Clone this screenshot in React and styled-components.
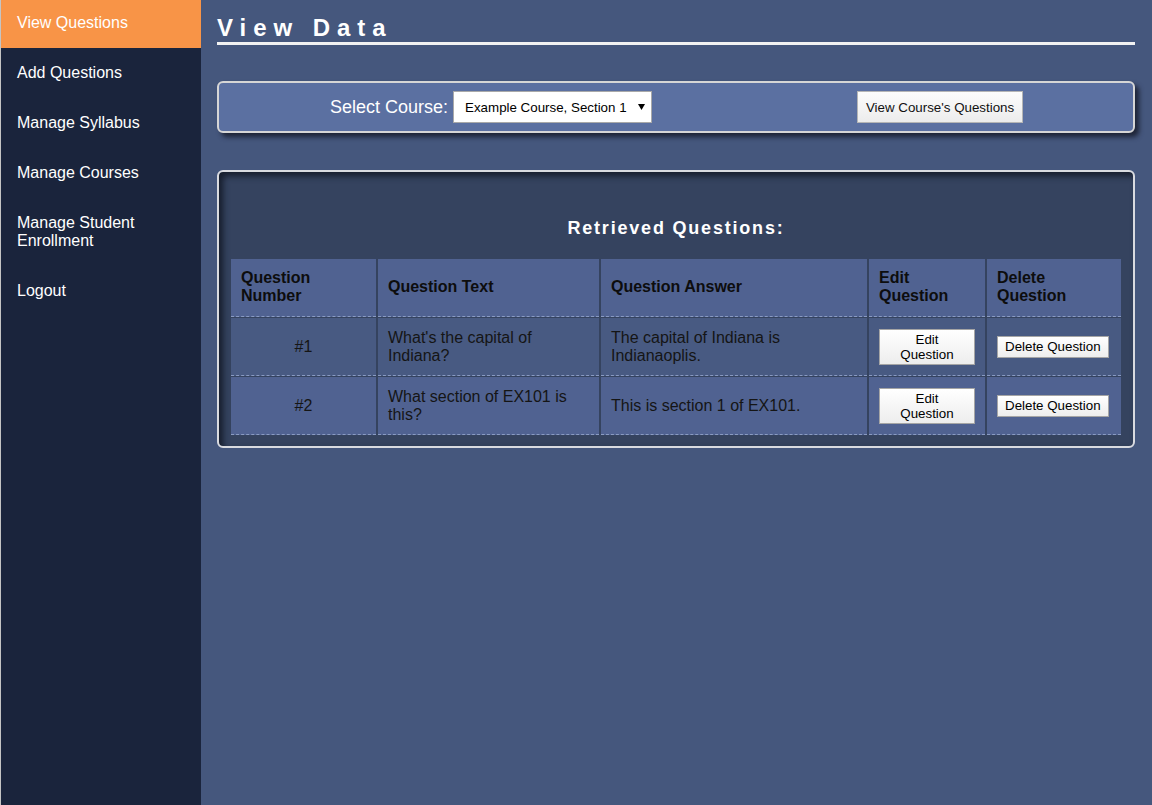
import React from 'react'
import styled, { createGlobalStyle } from 'styled-components'

const GlobalStyle = createGlobalStyle`
  html, body {
    margin: 0;
    padding: 0;
    background: #45577d;
    font-family: "Liberation Sans", Arial, sans-serif;
  }
  * {
    box-sizing: border-box;
  }
`

const navItems = [
  'View Questions',
  'Add Questions',
  'Manage Syllabus',
  'Manage Courses',
  'Manage Student Enrollment',
  'Logout',
]

const questions = [
  {
    id: 1,
    text: "What's the capital of Indiana?",
    answer: 'The capital of Indiana is Indianaoplis.',
  },
  {
    id: 2,
    text: 'What section of EX101 is this?',
    answer: 'This is section 1 of EX101.',
  },
]

const App = () => {
  return (
    <Layout>
      <GlobalStyle />
      <Sidebar>
        {navItems.map((item, i) => (
          <NavItem key={item} $active={i === 0}>
            {item === 'Manage Student Enrollment' ? (
              <>
                Manage Student
                <br />
                Enrollment
              </>
            ) : (
              item
            )}
          </NavItem>
        ))}
      </Sidebar>
      <Main>
        <Title>View Data</Title>

        <SelectPanel>
          <SelectLabel>Select Course:</SelectLabel>
          <SelectWrap>
            <CourseSelect defaultValue="ex1">
              <option value="ex1">Example Course, Section 1</option>
            </CourseSelect>
            <Arrow width="7" height="6" viewBox="0 0 7 6">
              <path d="M0 0 L7 0 L3.5 6 Z" fill="#000" />
            </Arrow>
          </SelectWrap>
          <ViewButton type="button">View Course's Questions</ViewButton>
        </SelectPanel>

        <TablePanel>
          <TableHeading>Retrieved Questions:</TableHeading>
          <Table>
            <colgroup>
              <col style={{ width: '145px' }} />
              <col style={{ width: '221px' }} />
              <col style={{ width: '266px' }} />
              <col style={{ width: '116px' }} />
              <col style={{ width: '134px' }} />
            </colgroup>
            <thead>
              <tr>
                <Th>Question Number</Th>
                <Th>Question Text</Th>
                <Th>Question Answer</Th>
                <Th>Edit Question</Th>
                <Th>Delete Question</Th>
              </tr>
            </thead>
            <tbody>
              {questions.map((q, i) => (
                <Row key={q.id} $odd={i % 2 === 0}>
                  <Td $center>#{q.id}</Td>
                  <Td>{q.text}</Td>
                  <Td>{q.answer}</Td>
                  <Td>
                    <EditButton type="button">
                      Edit
                      <br />
                      Question
                    </EditButton>
                  </Td>
                  <Td>
                    <SmallButton type="button">Delete Question</SmallButton>
                  </Td>
                </Row>
              ))}
            </tbody>
          </Table>
        </TablePanel>
      </Main>
    </Layout>
  )
}

const Layout = styled.div`
  display: flex;
  min-height: 100vh;
  border-left: 1px solid #c4c4c4;
`

const Sidebar = styled.nav`
  width: 200px;
  flex-shrink: 0;
  background: #1a243c;
  display: flex;
  flex-direction: column;
`

const NavItem = styled.a`
  display: block;
  padding: 14px 16px 16px;
  margin-bottom: 2px;
  font-size: 16px;
  line-height: 18px;
  color: #fff;
  background: ${(p) => (p.$active ? '#f89447' : 'transparent')};
  cursor: pointer;
`

const Main = styled.main`
  flex: 1;
  padding: 14px 17px 0 16px;
  background: #45577d;
`

const Title = styled.h1`
  margin: 0;
  font-size: 24px;
  line-height: 28px;
  font-weight: bold;
  letter-spacing: 0.29em;
  color: #fff;
  border-bottom: 3px solid #f2f2f2;
`

const SelectPanel = styled.div`
  margin-top: 36px;
  display: flex;
  align-items: center;
  padding: 8px 8px 8px 111px;
  background: #5b70a1;
  border: 2px solid #d6d6d6;
  border-radius: 6px;
  box-shadow: 4px 4px 5px #1e2436;
`

const SelectLabel = styled.label`
  font-size: 18px;
  color: #fff;
  margin-right: 5px;
`

const SelectWrap = styled.div`
  position: relative;
  display: flex;
`

const CourseSelect = styled.select`
  appearance: none;
  width: 199px;
  height: 32px;
  padding: 0 14px 0 11px;
  font-family: "Liberation Sans", Arial, sans-serif;
  font-size: 13.33px;
  color: #000;
  background: #fff;
  border: 1px solid #a9a9a9;
  border-radius: 0;
  outline: none;
`

const Arrow = styled.svg`
  position: absolute;
  right: 7px;
  top: 13px;
  pointer-events: none;
`

const ViewButton = styled.button`
  margin-left: 205px;
  height: 32px;
  width: 166px;
  padding: 0 4px;
  white-space: nowrap;
  font-family: "Liberation Sans", Arial, sans-serif;
  font-size: 13.33px;
  color: #111;
  background: linear-gradient(#fcfcfc, #ececec);
  border: 1px solid #b5b5b5;
  border-radius: 0;
  cursor: pointer;
`

const TablePanel = styled.section`
  margin-top: 37px;
  padding: 46px 10px 10px;
  background: #35435f;
  border: 2px solid #d9dbe0;
  border-radius: 6px;
  box-shadow: inset 4px 4px 6px #161d2c;
`

const TableHeading = styled.h2`
  margin: 0 0 19px;
  text-align: center;
  font-size: 18px;
  line-height: 21px;
  font-weight: bold;
  letter-spacing: 0.1em;
  color: #fff;
`

const Table = styled.table`
  width: 100%;
  table-layout: fixed;
  border-collapse: separate;
  border-spacing: 2px 1px;
  font-size: 16px;
  color: #151515;
`

const Th = styled.th`
  background: #506291;
  padding: 10px 10px 11px;
  text-align: left;
  font-weight: bold;
  line-height: 18px;
  color: #0d0d0d;
  border-bottom: 1px dashed #8a9bc2;
`

const Row = styled.tr`
  background: ${(p) => (p.$odd ? '#485a82' : '#506291')};
`

const Td = styled.td`
  height: 58px;
  padding: 9px 10px;
  line-height: 18px;
  text-align: ${(p) => (p.$center ? 'center' : 'left')};
  vertical-align: middle;
  border-bottom: 1px dashed #8a9bc2;
`

const SmallButton = styled.button`
  padding: 2px 7px 3px;
  font-family: "Liberation Sans", Arial, sans-serif;
  font-size: 13.33px;
  line-height: 15px;
  color: #000;
  background: linear-gradient(#ffffff, #ededed);
  border: 1px solid #a5a5a5;
  border-radius: 0;
  cursor: pointer;
`

const EditButton = styled(SmallButton)`
  width: 96px;
  padding: 2px 6px;
`

export default App
